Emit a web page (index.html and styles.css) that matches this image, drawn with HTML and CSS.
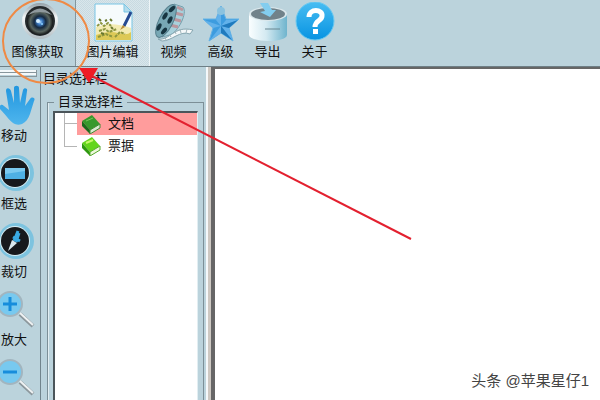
FILE: index.html
```html
<!DOCTYPE html>
<html lang="zh-CN">
  <head>
    <meta charset="UTF-8" />
    <meta name="viewport" content="width=device-width, initial-scale=1.0" />
    <title>图像获取</title>
    <link rel="stylesheet" href="styles.css">
  </head>
  <body>
    <header class="toolbar">
      <button class="tool wide">
        <svg class="tool-icon" viewBox="0 0 40 40">
          <defs>
            <linearGradient id="ring" x1="0" y1="0" x2="0" y2="1">
              <stop offset="0" stop-color="#94a1a8" />
              <stop offset="0.4" stop-color="#f4f7f8" />
              <stop offset="1" stop-color="#b3bec3" />
            </linearGradient>
            <radialGradient id="lens">
              <stop offset="0" stop-color="#a8d8ff" />
              <stop offset="0.2" stop-color="#3a78c0" />
              <stop offset="0.45" stop-color="#15283e" />
              <stop offset="0.75" stop-color="#59655f" />
              <stop offset="1" stop-color="#151718" />
            </radialGradient>
          </defs>
          <circle cx="22" cy="19" r="18" fill="url(#ring)" />
          <circle cx="22" cy="19" r="15" fill="#24292b" />
          <circle cx="22" cy="20" r="13" fill="url(#lens)" />
          <path d="M10 13Q22 0 34 13Q22 7 10 13Z" fill="#8f999d" />
          <circle cx="20" cy="19" r="2" fill="#d4eeff" />
          <circle cx="24" cy="22" r="1" fill="#8bd0ff" />
        </svg>
        <span>图像获取</span>
      </button>
      <button class="tool wide checked">
        <svg class="tool-icon" viewBox="0 0 40 40">
          <path d="M2 2H31L39 10V39H2Z" fill="#f6fbfc" stroke="#79c5e4" />
          <path d="M31 2V10H39Z" fill="#b4dcec" stroke="#79c5e4" />
          <path d="M3 25Q18 19 38 26V38H3Z" fill="#f3ebb2" />
          <path d="M3 33Q16 28 25 31T38 30V38H3Z" fill="#ddc956" />
          <path d="M4 24l4-3 3 3 4-3 3 3M6 29l6-2 4 3 8-3M22 35l5-5 5 2M5 35l8-3 7 3" fill="none" stroke="#8d963f" stroke-width="2" stroke-dasharray="3 1" />
          <path d="M6 17l2 2M12 19l2-1M17 17l2 2M8 31l3 1M18 25l2 2" stroke="#68762d" stroke-width="2" />
          <path d="M38 10L31 24" stroke="#254a91" stroke-width="3" />
          <path d="M30 23L27 28L32 25Z" fill="#b78935" />
        </svg>
        <span>图片编辑</span>
      </button>
      <button class="tool">
        <svg class="tool-icon" viewBox="0 0 40 40">
          <path d="M20 2L29 5C34 11 24 30 16 33L8 35Z" fill="#a9d1dc" stroke="#76a0ad" />
          <path d="M23 5l6 3M21 11l8 2M19 17l8 2M16 23l8 2" stroke="#bb969e" stroke-width="3" />
          <path d="M4 37C16 39 20 23 39 28L36 32C26 28 18 39 8 39Z" fill="#f4f8f9" stroke="#86a6b0" />
          <path d="M12 38l-1-3M17 35l-2-3M22 32l-1-3M27 31l-1-4M32 31l1-4" stroke="#a1b5bc" />
          <ellipse cx="12" cy="19" rx="7" ry="18" transform="rotate(27 12 19)" fill="#78a8b5" stroke="#567e8c" />
          <g fill="#173541">
            <ellipse cx="18" cy="7" rx="2" ry="4" transform="rotate(45 18 7)" />
            <ellipse cx="11" cy="14" rx="2" ry="4" transform="rotate(30 11 14)" />
            <ellipse cx="16" cy="18" rx="2" ry="4" transform="rotate(27 16 18)" />
            <ellipse cx="5" cy="25" rx="2" ry="4" transform="rotate(27 5 25)" />
            <ellipse cx="10" cy="29" rx="2" ry="4" transform="rotate(40 10 29)" />
          </g>
        </svg>
        <span>视频</span>
      </button>
      <button class="tool">
        <svg class="tool-icon" viewBox="0 0 40 40">
          <path d="M20 4L25 17L38 17L28 26L32 39L20 31L8 39L12 26L2 17L15 17Z" fill="#3d9cdf" stroke="#63b2e6" stroke-linejoin="round" />
          <path d="M20 5V24L15 18ZM3 18L20 24L12 26ZM20 24V31L9 38ZM20 24L28 26L31 38ZM20 24L25 18L37 18Z" fill="#62b1ea" />
          <path d="M20 24L31 38L20 31ZM20 24L37 18L28 26Z" fill="#207abd" />
          <circle cx="20" cy="9" r="4" fill="#8ac2df" />
        </svg>
        <span>高级</span>
      </button>
      <button class="tool">
        <svg class="tool-icon" viewBox="0 0 40 40">
          <defs>
            <linearGradient id="drum">
              <stop offset="0" stop-color="#fafeff" />
              <stop offset="0.45" stop-color="#d4eaf2" />
              <stop offset="1" stop-color="#6fb4cd" />
            </linearGradient>
          </defs>
          <path d="M1 12V33C2 41 38 41 39 33V12Z" fill="url(#drum)" />
          <ellipse cx="20" cy="12" rx="19" ry="7" fill="#dce8ec" />
          <ellipse cx="20" cy="12" rx="17" ry="6" fill="#71828a" />
          <path d="M12 1L20 1L24 8L28 8L22 15L12 10L17 9Z" fill="#83cdef" />
          <path d="M17 27H32" stroke="#688690" />
        </svg>
        <span>导出</span>
      </button>
      <button class="tool">
        <svg class="tool-icon" viewBox="0 0 40 40">
          <defs>
            <linearGradient id="help" x1="0" y1="0" x2="0" y2="1">
              <stop offset="0" stop-color="#48bdf2" />
              <stop offset="1" stop-color="#0793e2" />
            </linearGradient>
          </defs>
          <circle cx="20" cy="19" r="19" fill="url(#help)" stroke="#69c9f1" />
          <path d="M14 15C14 6 28 7 27 14C27 19 20 18 20 25" fill="none" stroke="#fff" stroke-width="5" />
          <rect x="18" y="27" width="5" height="5" fill="#fff" />
        </svg>
        <span>关于</span>
      </button>
    </header>

    <div class="workspace">
      <nav class="sidebar">
        <div class="grip"></div>
        <button class="side-tool">
          <svg class="side-icon" viewBox="0 0 36 40">
            <defs>
              <linearGradient id="hand" x1="0" y1="0" x2="0" y2="1">
                <stop offset="0" stop-color="#2196df" />
                <stop offset="1" stop-color="#4eb5ed" />
              </linearGradient>
            </defs>
            <path d="M13 38C8 34 6 30 0 24C-1 21 1 18 4 21L9 25L6 6C6 2 10 3 11 6L14 18V3C14 0 19 0 19 3L20 18L23 5C24 2 28 3 27 6L25 21L30 14C32 11 36 13 34 16L30 29C28 34 26 37 22 39C19 40 16 40 13 38Z" fill="url(#hand)" />
          </svg>
          <span>移动</span>
        </button>
        <button class="side-tool">
          <svg class="side-icon" viewBox="0 0 36 40">
            <circle cx="16" cy="20" r="18" fill="#7dc3df" />
            <circle cx="15" cy="20" r="15" fill="#d8edf4" />
            <circle cx="15" cy="20" r="14" fill="#17191d" />
            <rect x="5" y="15" width="20" height="11" fill="#4fb0e4" />
            <path d="M5 15H25V18L5 21Z" fill="#7ccaf0" />
          </svg>
          <span>框选</span>
        </button>
        <button class="side-tool">
          <svg class="side-icon" viewBox="0 0 36 40">
            <circle cx="16" cy="20" r="18" fill="#7dc3df" />
            <circle cx="15" cy="20" r="15" fill="#d8edf4" />
            <circle cx="15" cy="20" r="14" fill="#17191d" />
            <path d="M18 10L14 20M13 16L20 20M19 12L16 21" stroke="#39a9e3" stroke-width="3" />
            <path d="M12 19L17 22L8 30Z" fill="#dbe9ef" />
          </svg>
          <span>裁切</span>
        </button>
        <button class="side-tool">
          <svg class="side-icon" viewBox="0 0 36 40">
            <path d="M20 25L33 37" stroke="#8c979c" stroke-width="4" />
            <path d="M20 24L33 36" stroke="#eef2f3" stroke-width="2" />
            <circle cx="10" cy="15" r="12" fill="#78c9ef" stroke="#a2b5bf" stroke-width="2" />
            <path d="M3 15H17M10 8V22" stroke="#168ddc" stroke-width="3" />
          </svg>
          <span>放大</span>
        </button>
        <button class="side-tool" aria-label="缩小">
          <svg class="side-icon" viewBox="0 0 36 40">
            <path d="M20 25L33 37" stroke="#8c979c" stroke-width="4" />
            <path d="M20 24L33 36" stroke="#eef2f3" stroke-width="2" />
            <circle cx="10" cy="15" r="12" fill="#78c9ef" stroke="#a2b5bf" stroke-width="2" />
            <path d="M3 15H17" stroke="#168ddc" stroke-width="3" />
          </svg>
        </button>
      </nav>

      <aside class="catalog">
        <div class="catalog-title">目录选择栏</div>
        <fieldset class="catalog-group">
          <legend>目录选择栏</legend>
          <ul class="tree">
            <li class="node">
              <a class="node-link selected" href="#">
                <svg class="book" viewBox="0 0 20 20">
                  <path d="M1 7L11 1L19 10L9 16Z" fill="#38992c" />
                  <path d="M1 7L9 16V20L1 12Z" fill="#1c6a1c" />
                  <path d="M9 16L19 10V14L9 20Z" fill="#d9ead0" stroke="#3f8a34" />
                  <path d="M5 7L12 4" stroke="#7cc35e" />
                </svg>
                <span>文档</span>
              </a>
            </li>
            <li class="node">
              <a class="node-link" href="#">
                <svg class="book" viewBox="0 0 20 20">
                  <path d="M1 7L11 1L19 10L9 16Z" fill="#63d51c" />
                  <path d="M1 7L9 16V20L1 12Z" fill="#2f9810" />
                  <path d="M9 16L19 10V14L9 20Z" fill="#edf7dc" stroke="#55a92c" />
                  <path d="M5 7L12 4" stroke="#c7f76c" stroke-width="2" />
                </svg>
                <span>票据</span>
              </a>
            </li>
          </ul>
        </fieldset>
      </aside>

      <main class="canvas">
        <p class="credit">头条 @苹果星仔1</p>
      </main>
    </div>

    <!-- 标注：圆圈和箭头 -->
    <svg class="callout" width="420" height="250" viewBox="0 0 420 250">
      <ellipse cx="46" cy="41" rx="43" ry="42" fill="none" stroke="#ef8a45" stroke-width="2" />
      <path d="M92 76L411 239" stroke="#e3202f" stroke-width="2" />
      <path d="M79 68H98L89 83Z" fill="#ee1c25" />
    </svg>
  </body>
</html>
```
FILE: styles.css
```css
* {
  box-sizing: border-box;
}

body {
  position: relative;
  display: flex;
  flex-direction: column;
  height: 100vh;
  margin: 0;
  overflow: hidden;
  background: #bbd3dc;
  color: #111;
  font-family: "Liberation Sans", "Noto Sans CJK SC", sans-serif;
  font-size: 13px;
  line-height: 18px;
}

button {
  border: none;
  padding: 0;
  background: none;
  color: inherit;
  font: inherit;
  cursor: pointer;
}

.toolbar {
  display: flex;
  flex-shrink: 0;
  height: 67px;
  border-bottom: 1px solid #6e7f86;
}

.tool {
  display: flex;
  flex-direction: column;
  align-items: center;
  gap: 1px;
  width: 47px;
  padding-top: 2px;
}

.tool.wide {
  width: 75px;
}

.tool.checked {
  border-left: 1px solid #84959c;
  border-right: 1px solid #eef5f7;
  background: repeating-conic-gradient(#d9e6eb 0 25%, #c8dae1 0 50%) 0 0 / 2px 2px;
}

.tool-icon {
  width: 40px;
  height: 40px;
}

.workspace {
  display: flex;
  flex: 1;
  min-height: 0;
}

.sidebar {
  display: flex;
  flex-direction: column;
  flex-shrink: 0;
  width: 41px;
  border-right: 1px solid #71848c;
  overflow: hidden;
}

.grip {
  flex-shrink: 0;
  width: 37px;
  height: 7px;
  margin: 3px 0 8px;
  border: solid #87969c;
  border-width: 0 1px 1px 0;
  background: linear-gradient(#f3f8fa 0 2px, #87969c 2px 3px, #f3f8fa 3px 5px, #bbd3dc 5px);
}

.side-tool {
  display: flex;
  flex-direction: column;
  flex-shrink: 0;
  align-items: flex-start;
  height: 68px;
}

.side-tool span {
  padding-left: 1px;
}

.side-icon {
  width: 36px;
  height: 40px;
  margin-bottom: 2px;
}

.catalog {
  display: flex;
  flex-direction: column;
  flex-shrink: 0;
  width: 170px;
  padding: 3px 7px 0 2px;
}

.catalog-title {
  padding-bottom: 5px;
}

.catalog-group {
  flex: 1;
  min-width: 0;
  margin: 0 0 0 4px;
  padding: 0 5px 0 5px;
  border: 1px solid #7c8f97;
  border-bottom: none;
  box-shadow: inset 1px 0 #e2eef2;
}

.catalog-group legend {
  margin-left: 1px;
  padding: 0 4px;
}

.tree {
  height: 100%;
  margin: 0;
  padding: 0;
  border: solid #4b555a;
  border-width: 2px 1px 0 2px;
  border-right-color: #e2eef2;
  background: #fff;
  list-style: none;
}

.node {
  display: flex;
  height: 22px;
  padding-left: 9px;
}

/* 树形连接线 */
.node::before {
  content: "";
  width: 12px;
  height: 11px;
  border: solid #b5b5b5;
  border-width: 0 0 1px 1px;
}

.node:first-child::before {
  height: 22px;
  border-bottom: none;
  background: linear-gradient(#b5b5b5, #b5b5b5) 0 10px / 12px 1px no-repeat;
}

.node-link {
  display: flex;
  flex: 1;
  align-items: center;
  gap: 7px;
  padding-left: 4px;
  color: #111;
  text-decoration: none;
}

.node-link.selected {
  background: #ff9c9c;
}

.book {
  width: 20px;
  height: 20px;
}

.canvas {
  display: flex;
  flex: 1;
  align-items: flex-end;
  justify-content: flex-end;
  border: solid #666;
  border-width: 2px 0 0 4px;
  background: #fff;
  box-shadow: -3px 0 #cdc8c2, -5px 0 #f4f8fa;
}

.credit {
  margin: 0;
  padding: 0 11px 9px 0;
  color: #444;
  font-size: 15px;
  line-height: 20px;
}

.callout {
  position: absolute;
  top: 0;
  left: 0;
  pointer-events: none;
}
```
